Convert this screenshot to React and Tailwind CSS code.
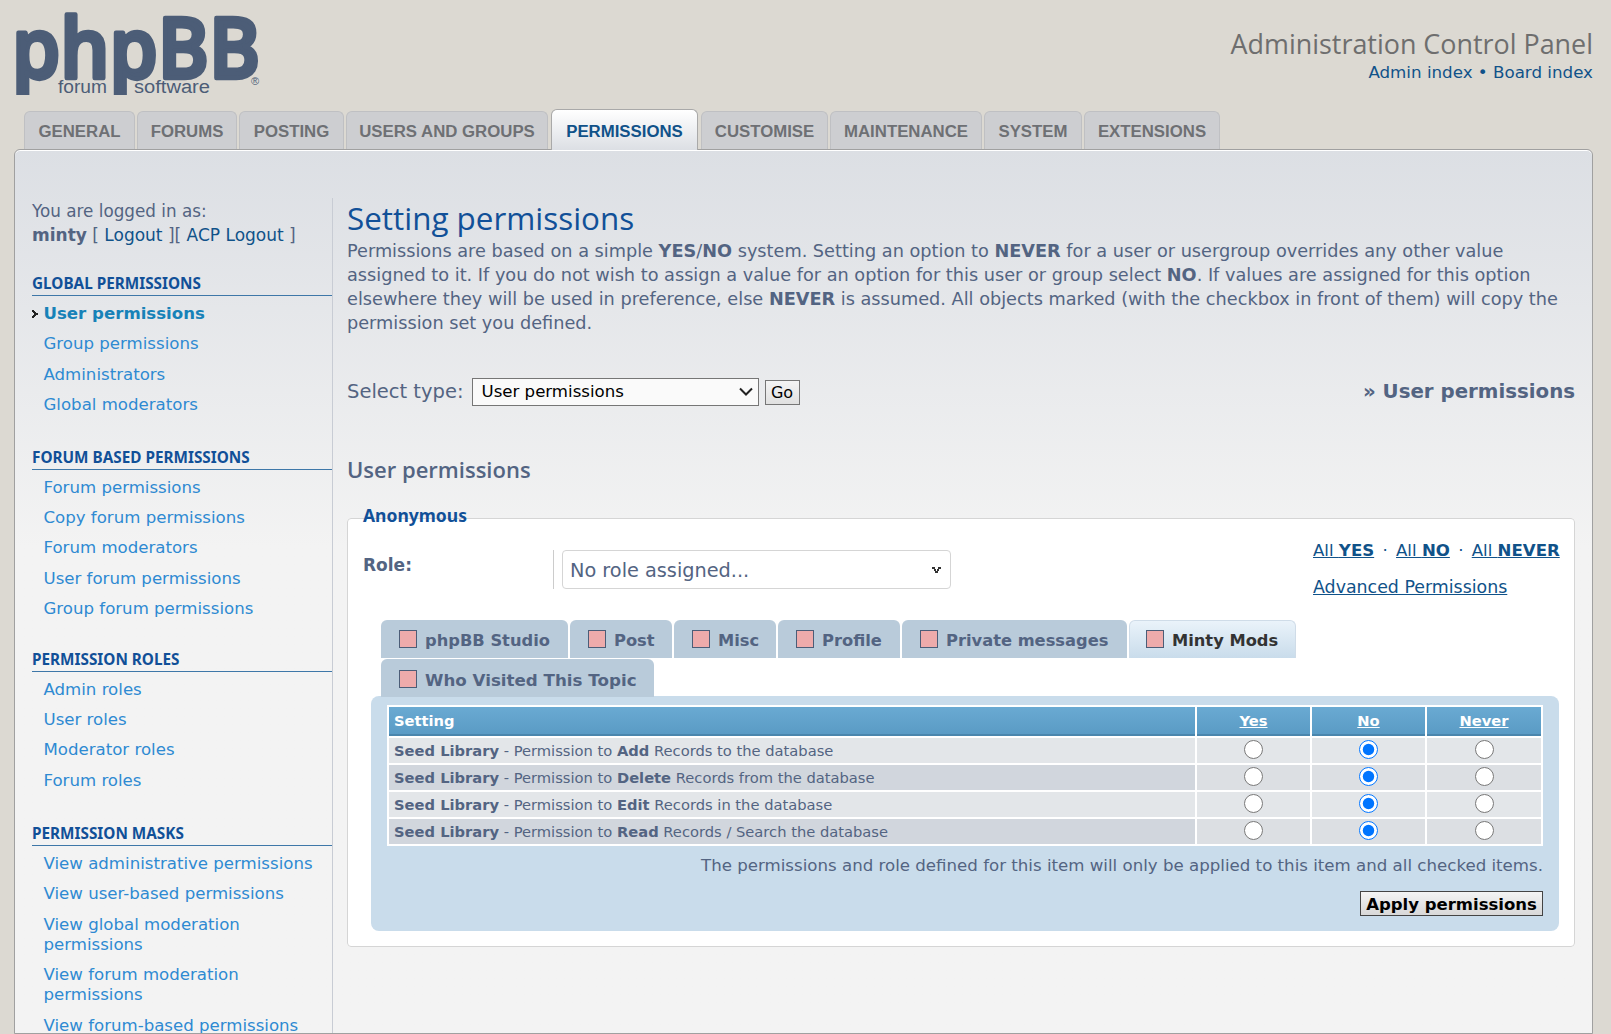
import React from "react";

const verdana = "font-['DejaVu_Sans',sans-serif]";

const tabs = [
  ["GENERAL", "w-[111px]"],
  ["FORUMS", "w-[100px]"],
  ["POSTING", "w-[105px]"],
  ["USERS AND GROUPS", "w-[202px]"],
  ["PERMISSIONS", "w-[147px]", true],
  ["CUSTOMISE", "w-[127px]"],
  ["MAINTENANCE", "w-[152px]"],
  ["SYSTEM", "w-[98px]"],
  ["EXTENSIONS", "w-[136px]"],
];

const sections = [
  ["GLOBAL PERMISSIONS", "mt-[24px]", ["User permissions", "Group permissions", "Administrators", "Global moderators"]],
  ["FORUM BASED PERMISSIONS", "mt-[19px]", ["Forum permissions", "Copy forum permissions", "Forum moderators", "User forum permissions", "Group forum permissions"]],
  ["PERMISSION ROLES", "mt-[17px]", ["Admin roles", "User roles", "Moderator roles", "Forum roles"]],
  ["PERMISSION MASKS", "mt-[20px]", ["View administrative permissions", "View user-based permissions", "View global moderation permissions", "View forum moderation permissions", "View forum-based permissions", "View forum permissions"]],
];

const permTabs = [
  ["phpBB Studio", "w-[187px]"],
  ["Post", "w-[102px]"],
  ["Misc", "w-[102px]"],
  ["Profile", "w-[122px]"],
  ["Private messages", "w-[225px]"],
  ["Minty Mods", "w-[167px]", true],
];

const rows = [
  ["Add", "Records to the database"],
  ["Delete", "Records from the database"],
  ["Edit", "Records in the database"],
  ["Read", "Records / Search the database"],
];

function Logo() {
  return (
    <svg width="250" height="85" viewBox="0 0 250 85" className="block">
      <text x="-2" y="68" fontFamily="'Open Sans',sans-serif" fontWeight="600" fontSize="84" fill="#4c5d77" stroke="#4c5d77" strokeWidth="4.5" strokeLinejoin="round" textLength="248" lengthAdjust="spacingAndGlyphs">phpBB</text>
      <text x="44" y="83" fontFamily="'Liberation Sans',sans-serif" fontSize="18" fill="#4c5d77" textLength="49" lengthAdjust="spacingAndGlyphs">forum</text>
      <text x="120" y="83" fontFamily="'Liberation Sans',sans-serif" fontSize="18" fill="#4c5d77" textLength="76" lengthAdjust="spacingAndGlyphs">software</text>
      <text x="237" y="75" fontFamily="'Liberation Sans',sans-serif" fontSize="11" fill="#4c5d77">®</text>
    </svg>
  );
}

function PinkBox() {
  return <span className="block w-[18px] h-[18px] shrink-0 bg-[#eeabab] border border-[#4c5d77] mr-[8px] -mt-[5px]" />;
}

function Radio({ checked }) {
  return <input type="radio" checked={checked} readOnly className="block w-[19px] h-[19px] m-0 -mt-[3px]" />;
}

function Arrow() {
  return (
    <svg width="6" height="8" viewBox="0 0 6 8" className="block" shapeRendering="crispEdges">
      <path d="M0 0h2v1h1v1h1v1h2v2h-2v1h-1v1h-1v1h-2v-2h1v-1h1v-2h-1v-1h-1z" fill="#222" />
    </svg>
  );
}

export default function App() {
  return (
    <div className={`h-[1034px] overflow-hidden bg-[#dcd9d2] text-[#536482] ${verdana}`}>
      <header className="flex justify-between h-[111px] pl-[14px] pr-[18px]">
        <div className="pt-[10px]">
          <Logo />
        </div>
        <div className="text-right pt-[27px]">
          <div className="text-[26.9px] leading-[34px] text-[#6e6e6e] font-['Open_Sans',sans-serif]">Administration Control Panel</div>
          <div className="text-[16.7px] leading-[20px] mt-[1px] text-[#105289]">Admin index • Board index</div>
        </div>
      </header>

      <nav className="relative z-10 flex items-end gap-[2px] pl-[24px] h-[38px]">
        {tabs.map(([t, w, active]) => (
          <div
            key={t}
            className={`${w} flex items-center justify-center pt-[2px] font-['Liberation_Sans',sans-serif] font-bold text-[16.8px] rounded-t-[6px] border border-b-0 ${
              active
                ? "h-[41px] -mb-px mx-[1px] pt-[4px] bg-gradient-to-b from-white to-[#dcdfe4] border-[#a9a9a9] text-[#105289]"
                : "h-[38px] bg-[#cdced1] border-[#bfc0c3] text-[#6e7074]"
            }`}
          >
            {t}
          </div>
        ))}
      </nav>

      <main className="flex h-[885px] ml-[14px] mr-[18px] border border-[#a0a0a0] rounded-t-[6px] bg-gradient-to-b from-[#dcdfe4] to-[#f3f3f3] to-[45%] shadow-[inset_0_1px_0_#ffffff] pt-[48px] pl-[17px] pr-[17px] overflow-hidden">
        <aside className="w-[301px] shrink-0 border-r border-[#c8ccd4] h-[900px]">
          <div className="text-[16.8px] leading-[24px] text-[#536482] pt-[1px]">
            <div>You are logged in as:</div>
            <div className="text-[17px]">
              <b>minty</b> [ <span className="text-[#105289]">Logout</span> ][ <span className="text-[#105289]">ACP Logout</span> ]
            </div>
          </div>
          {sections.map(([title, mt, items], si) => (
            <section key={title} className={mt}>
              <h3 className="h-[25px] border-b border-[#3e77a8] font-['Noto_Sans',sans-serif] font-bold text-[15.3px] leading-[24px] text-[#115098]">{title}</h3>
              <ul className="mt-[8px]">
                {items.map((it, i) => {
                  const active = si === 0 && i === 0;
                  return (
                    <li key={it} className="flex items-start pb-[10.4px] text-[16.6px] leading-[20px]">
                      <span className="w-[11.5px] shrink-0 pt-[6px]">{active && <Arrow />}</span>
                      <span className={active ? "font-bold text-[#1782b8]" : "text-[#2e8ad2]"}>{it}</span>
                    </li>
                  );
                })}
              </ul>
            </section>
          ))}
        </aside>

        <div className="flex-1 min-w-0 pl-[14px]">
          <h1 className="-mt-[1px] text-[31.4px] leading-[42px] text-[#115098] font-['Open_Sans',sans-serif]">Setting permissions</h1>
          <p className="text-[17.7px] leading-[24px]">
            Permissions are based on a simple <b>YES</b>/<b>NO</b> system. Setting an option to <b>NEVER</b> for a user or usergroup overrides any other value assigned to it. If you do not wish to assign a value for an option for this user or group select <b>NO</b>. If values are assigned for this option elsewhere they will be used in preference, else <b>NEVER</b> is assumed. All objects marked (with the checkbox in front of them) will copy the permission set you defined.
          </p>

          <div className="flex items-center mt-[43px] h-[28px]">
            <span className="text-[19.5px] mr-[8px]">Select type:</span>
            <div className="relative w-[287px] h-[28px]">
              <select className="block appearance-none w-full h-full bg-[#fafafa] border border-[#767676] text-[16.6px] text-black px-[9px]" defaultValue="u">
                <option value="u">User permissions</option>
              </select>
              <svg width="14" height="9" viewBox="0 0 14 9" className="absolute right-[6px] top-[9px]">
                <path d="M1 1.5l6 6 6-6" fill="none" stroke="#222" strokeWidth="2" />
              </svg>
            </div>
            <button className="ml-[6px] w-[35px] h-[25px] bg-gradient-to-b from-[#f4f4f4] to-[#e0e0e0] border border-[#767676] text-[16px] text-black leading-none pt-[2px]">Go</button>
            <span className="ml-auto text-[19.8px] font-bold whitespace-nowrap">» User permissions</span>
          </div>

          <h2 className="mt-[48px] text-[22px] leading-[30px] font-semibold font-['Open_Sans',sans-serif]">User permissions</h2>

          <fieldset className="relative mt-[34px] min-w-0 h-[429px] bg-white border border-[#d5d5d5] rounded-[4px] px-[15px]">
            <div className="absolute -top-[16px] left-[15px] font-['Noto_Sans',sans-serif] font-bold text-[17.5px] leading-[24px] text-[#115098]">Anonymous</div>

            <div className="flex pt-[31px] h-[101px]">
              <div className="w-[191px] h-[39px] border-r border-[#ccc] font-bold text-[17px] leading-[30px]">Role:</div>
              <div className="ml-[8px] w-[389px] h-[39px] flex items-center justify-between bg-white border border-[#d5d5d5] rounded-[4px] px-[7px] pt-[3px] text-[19.3px] text-[#536482]">
                <span>No role assigned...</span>
                <svg width="9" height="6" viewBox="0 0 9 6" shapeRendering="crispEdges" className="mr-[2px] -mt-[3px]">
                  <path d="M0 0h3v2h1v2h1v-2h1v-2h3v2h-2v2h-1v2h-3v-2h-1v-2h-2z" fill="#333" />
                </svg>
              </div>
              <div className="ml-auto w-[246px] -mt-[11px] text-[#105289]">
                <div className="text-[16.6px] leading-[24px] whitespace-nowrap">
                  <span className="underline">All <b>YES</b></span> <span className="mx-[3px]">·</span> <span className="underline">All <b>NO</b></span> <span className="mx-[3px]">·</span> <span className="underline">All <b>NEVER</b></span>
                </div>
                <div className="mt-[12px] text-[17.4px] leading-[24px] underline whitespace-nowrap">Advanced Permissions</div>
              </div>
            </div>

            <div className="pl-[18px] relative z-10">
              <div className="flex gap-[2px]">
                {permTabs.map(([t, w, active]) => (
                  <div
                    key={t}
                    className={`${w} h-[38px] flex items-center pt-[4px] rounded-t-[6px] font-bold text-[16.3px] ${
                      active ? "pl-[16px] bg-gradient-to-b from-[#eaf3fa] to-[#c9dceb] border border-b-0 border-[#cfdce8] text-[#333]" : "pl-[18px] bg-[#b9cbda] text-[#536482]"
                    }`}
                  >
                    <PinkBox />
                    <span className="whitespace-nowrap">{t}</span>
                  </div>
                ))}
              </div>
              <div className="mt-px w-[273px] h-[38px] flex items-center pl-[18px] pt-[6px] rounded-t-[6px] bg-[#b9cbda] font-bold text-[16.7px] text-[#536482]">
                <PinkBox />
                <span className="whitespace-nowrap">Who Visited This Topic</span>
              </div>
            </div>

            <div className="h-[235px] -mt-px bg-[#c9dceb] rounded-[8px] pt-[9px] px-[16px] ml-[8px]">
              <div className="border-2 border-white bg-white">
                <div className="grid grid-cols-[806px_113px_113px_114px] gap-[2px] bg-white text-[14.7px]">
                  <div className="h-[29px] flex items-center pl-[5px] pt-[2px] bg-gradient-to-b from-[#6aaad2] to-[#5a9bc5] border-b-2 border-[#4a86ad] text-white font-bold">Setting</div>
                  {["Yes", "No", "Never"].map((h) => (
                    <div key={h} className="h-[29px] flex items-center justify-center pt-[2px] bg-gradient-to-b from-[#6aaad2] to-[#5a9bc5] border-b-2 border-[#4a86ad] text-white font-bold underline">{h}</div>
                  ))}
                  {rows.map(([verb, rest], i) => {
                    const bg = i % 2 === 0 ? "bg-[#e3e6e9]" : "bg-[#d1d6dd]";
                    const bgR = i % 2 === 0 ? "bg-[#e3e6e9]" : "bg-[#dcdfe3]";
                    return (
                      <React.Fragment key={verb}>
                        <div className={`${bg} h-[25px] flex items-center pl-[5px] pt-[2px] whitespace-nowrap`}>
                          <b>Seed Library</b>
                          <span className="whitespace-pre"> - Permission to </span>
                          <b>{verb}</b>
                          <span className="whitespace-pre"> {rest}</span>
                        </div>
                        {[false, true, false].map((c, j) => (
                          <div key={j} className={`${bgR} h-[25px] flex items-center justify-center`}>
                            <Radio checked={c} />
                          </div>
                        ))}
                      </React.Fragment>
                    );
                  })}
                </div>
              </div>
              <p className="text-right text-[16.64px] leading-[24px] mt-[8px] whitespace-nowrap">The permissions and role defined for this item will only be applied to this item and all checked items.</p>
              <div className="flex justify-end mt-[13px]">
                <button className="w-[183px] h-[25px] border border-[#444] bg-gradient-to-b from-[#f4f4f4] to-[#d8d8d8] pt-[3px] font-bold text-[16.5px] leading-none text-black">Apply permissions</button>
              </div>
            </div>
          </fieldset>
        </div>
      </main>
    </div>
  );
}
